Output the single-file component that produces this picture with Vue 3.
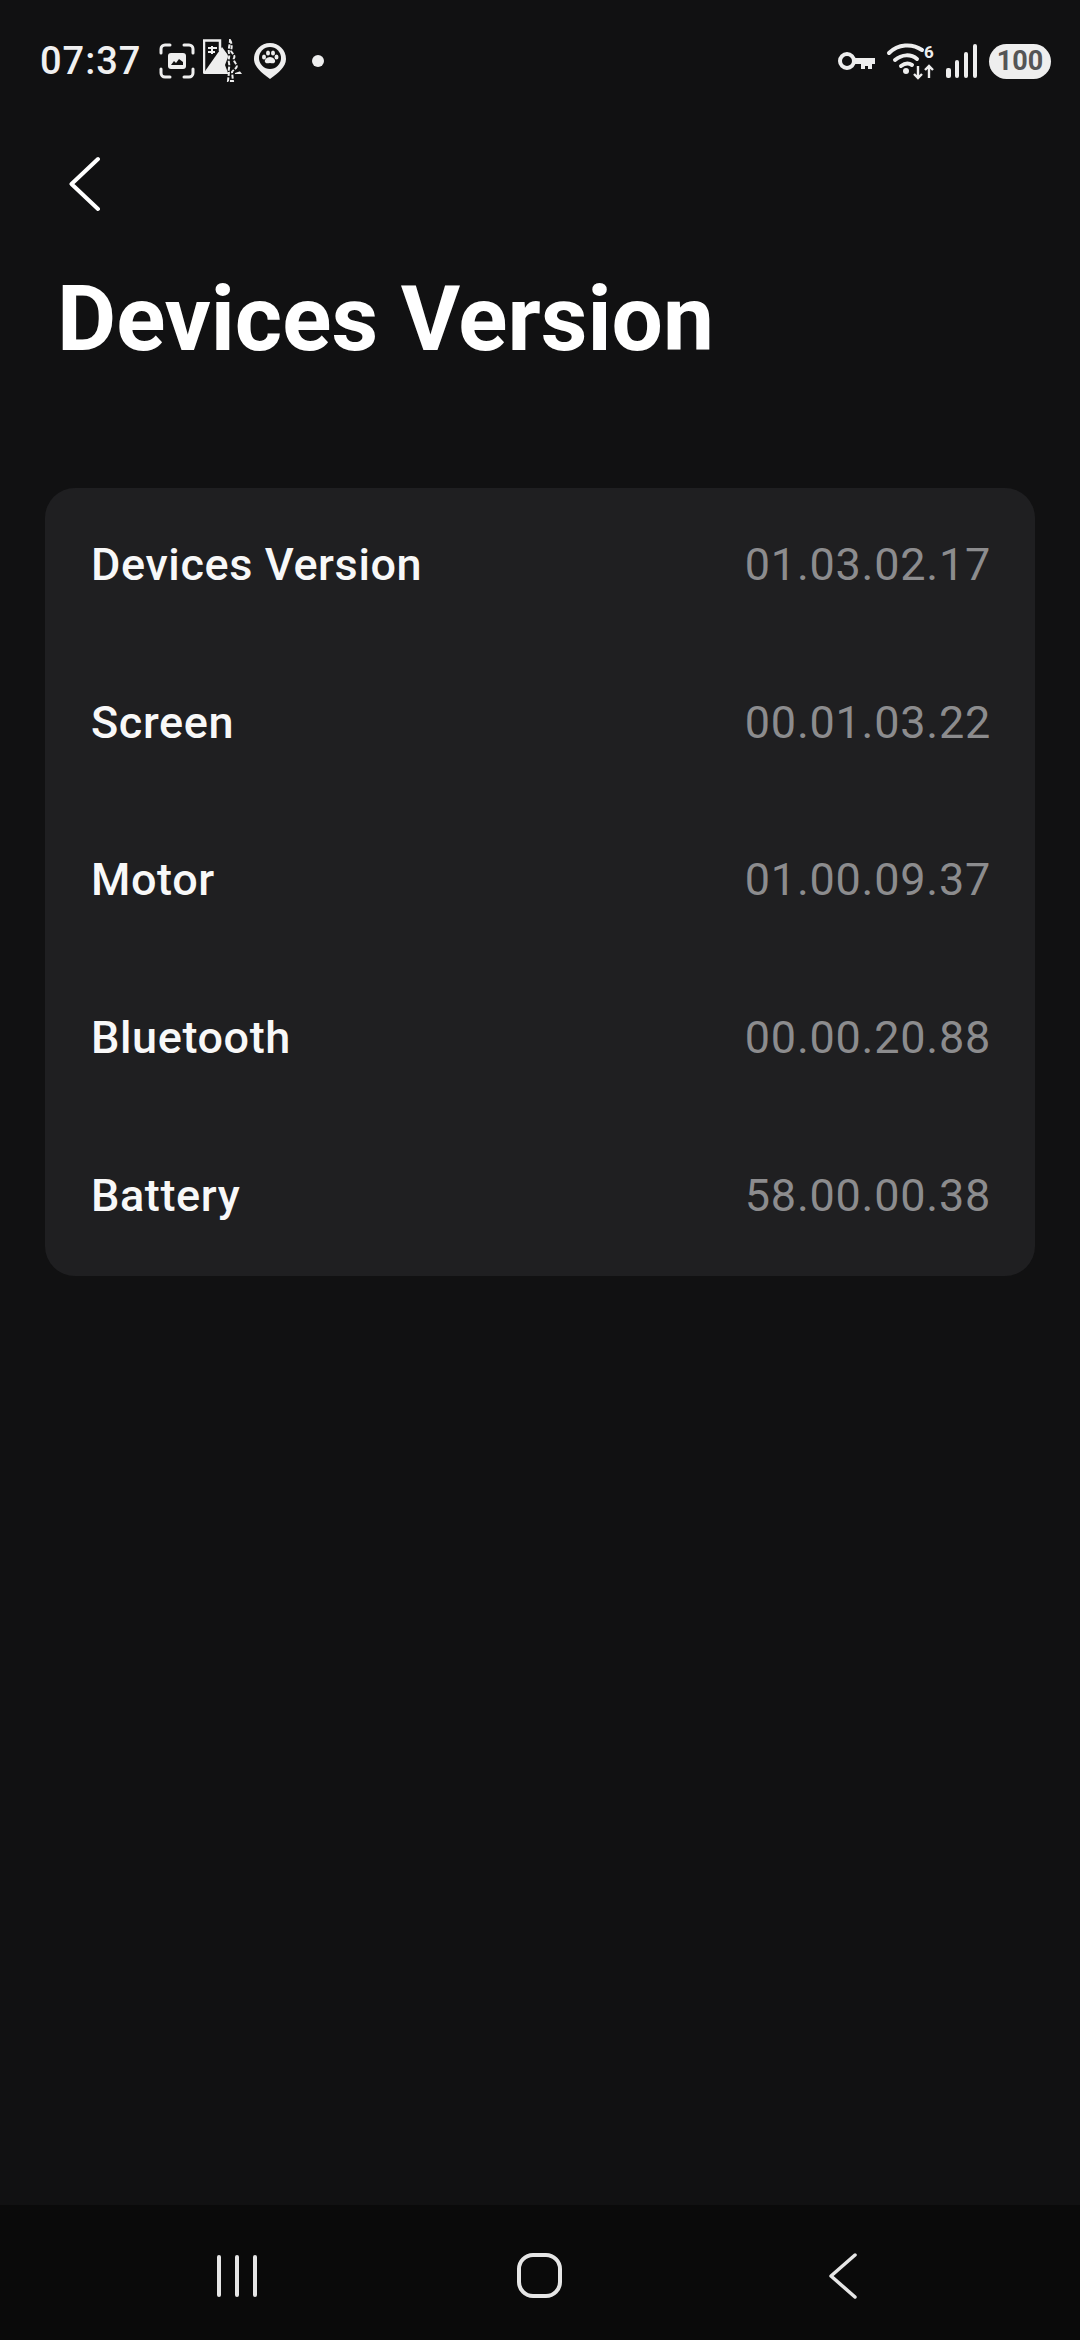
<template>
  <div class="page">
    <!-- status bar -->
    <header class="status-bar">
      <span class="time">07:37</span>
      <div class="status-left">
        <svg width="36" height="36" viewBox="0 0 36 36">
          <path d="M2 10V6a4 4 0 0 1 4-4h5M25 2h5a4 4 0 0 1 4 4v4M34 26v4a4 4 0 0 1-4 4h-5M11 34H6a4 4 0 0 1-4-4v-4" fill="none" stroke="#eee" stroke-width="3" stroke-linecap="round"/>
          <rect x="9" y="10" width="18" height="16" rx="3" fill="#eee"/>
          <path d="M12 22l3-4 2 2 3-4 4 3v3z" fill="#111"/>
        </svg>
        <svg width="42" height="44" viewBox="0 0 42 44">
          <path d="M1 34V1.500h16V12" fill="none" stroke="#eee" stroke-width="2.500"/>
          <path d="M5 9h9M5 13h7M9 7v8" stroke="#eee" stroke-width="2"/>
          <path d="M0 35L19 8l20 27z" fill="#eee"/>
          <path d="M27 2l3 8 4 5 1 9 3 8-6 2-1 9h-5l-1-9-3-8 3-8-1-8z" fill="#111"/>
          <path d="M27 1c2 3 2 8 1 10s5 5 3 8 5 7 2 10-3 2-4 4l1 9h-5l1-9c-1-2 1-5 0-9s1-7 0-10 1-9 1-13z" fill="none" stroke="#eee" stroke-width="2" stroke-dasharray="4 1.500"/>
        </svg>
        <svg width="34" height="38" viewBox="0 0 34 38">
          <path d="M17 1C8 1 1 8 1 17c0 8 8 14 16 20 8-6 16-12 16-20C33 8 26 1 17 1z" fill="#eee"/>
          <circle cx="17" cy="16" r="11" fill="#111"/>
          <ellipse cx="11" cy="15" rx="2" ry="2.500" fill="#eee"/>
          <ellipse cx="15" cy="11" rx="2" ry="2.600" fill="#eee"/>
          <ellipse cx="20" cy="11" rx="2" ry="2.600" fill="#eee"/>
          <ellipse cx="23.500" cy="15" rx="2" ry="2.500" fill="#eee"/>
          <path d="M17 15c-3 0-6 3-5 5 1 2 3 1 5 1s4 1 5-1c1-2-2-5-5-5z" fill="#eee"/>
        </svg>
        <span class="dot"></span>
      </div>
      <div class="status-right">
        <svg width="38" height="20" viewBox="0 0 38 20">
          <circle cx="9" cy="10" r="7" fill="none" stroke="#eee" stroke-width="4"/>
          <path d="M16 7h21v6h-3v5h-4v-3h-3v3h-4v-5h-7z" fill="#eee"/>
        </svg>
        <svg class="wifi" width="48" height="36" viewBox="0 0 48 36">
          <path d="M2 10c9-9 23-10 33-3" fill="none" stroke="#eee" stroke-width="4" stroke-linecap="round"/>
          <path d="M8 17c7-6 16-6 22-1" fill="none" stroke="#eee" stroke-width="4" stroke-linecap="round"/>
          <path d="M14 23c4-3 8-3 11-1" fill="none" stroke="#eee" stroke-width="4" stroke-linecap="round"/>
          <circle cx="19" cy="28" r="3" fill="#eee"/>
          <path d="M31 23v12M27 31l4 4 4-4M42 35V23M38 27l4-4 4 4" fill="none" stroke="#eee" stroke-width="2.400"/>
          <text x="37" y="15" class="wifi-six">6</text>
        </svg>
        <svg width="32" height="34" viewBox="0 0 32 34">
          <rect x="0" y="24" width="5" height="10" rx="2" fill="#eee"/>
          <rect x="9" y="16" width="4" height="18" rx="2" fill="#eee"/>
          <rect x="18" y="8" width="4" height="26" rx="2" fill="#eee"/>
          <rect x="27" y="0" width="4" height="34" rx="2" fill="#eee"/>
        </svg>
        <span class="battery">100</span>
      </div>
    </header>

    <main class="content">
      <button class="back" type="button" aria-label="Back">
        <svg width="32" height="56" viewBox="0 0 32 56">
          <path d="M29 3L2.500 28 29 53" fill="none" stroke="#fff" stroke-width="4" stroke-linecap="round" stroke-linejoin="round"/>
        </svg>
      </button>

      <h1 class="title">Devices Version</h1>

      <section class="card">
        <div v-for="row in rows" :key="row.name" class="row">
          <span class="row-name">{{ row.name }}</span>
          <span class="row-value">{{ row.version }}</span>
        </div>
      </section>
    </main>

    <!-- android nav -->
    <footer class="nav-bar">
      <div class="recents">
        <span></span><span></span><span></span>
      </div>
      <div class="home"></div>
      <svg width="28" height="46" viewBox="0 0 28 46">
        <path d="M26 2L2 23l24 21" fill="none" stroke="#e6e6e6" stroke-width="3.500" stroke-linecap="round" stroke-linejoin="round"/>
      </svg>
    </footer>
  </div>
</template>

<script setup>
const rows = [
  { name: "Devices Version", version: "01.03.02.17" },
  { name: "Screen", version: "00.01.03.22" },
  { name: "Motor", version: "01.00.09.37" },
  { name: "Bluetooth", version: "00.00.20.88" },
  { name: "Battery", version: "58.00.00.38" }
];
</script>

<style>
html,
body {
  margin: 0;
  background: #111112;
}
</style>

<style scoped>
.page {
  display: flex;
  flex-direction: column;
  width: 1080px;
  height: 2340px;
  overflow: hidden;
  background: #111112;
  color: #fff;
  font-family: Roboto, "Liberation Sans", sans-serif;
}

/* status bar */
.status-bar {
  display: flex;
  align-items: center;
  flex: none;
  height: 82px;
  padding: 20px 29px 0 40px;
}

.time {
  font-size: 38px;
  font-weight: 500;
  letter-spacing: 1px;
  color: #f0f0f0;
}

.status-left {
  display: flex;
  align-items: center;
  margin-left: 18px;
  gap: 8px;
}

.dot {
  width: 12px;
  height: 12px;
  margin-left: 17px;
  border-radius: 50%;
  background: #eee;
}

.status-right {
  display: flex;
  align-items: center;
  margin-left: auto;
  gap: 11px;
}

.wifi {
  overflow: visible;
}

.wifi-six {
  font-size: 17px;
  font-weight: 700;
  fill: #eee;
  font-family: Roboto, sans-serif;
}

.battery {
  width: 62px;
  height: 35px;
  border-radius: 18px;
  background: #eee;
  color: #555;
  font-size: 27px;
  font-weight: 700;
  line-height: 35px;
  text-align: center;
}

/* header */
.content {
  flex: 1;
  padding: 0 45px;
}

.back {
  display: block;
  padding: 0;
  margin: 54px 0 0 24px;
  border: 0;
  background: none;
  line-height: 0;
}

.title {
  margin: 54px 0 0 12px;
  font-size: 91px;
  font-weight: 700;
  line-height: 107px;
  white-space: nowrap;
}

/* card */
.card {
  display: grid;
  grid-template-rows: repeat(5, 1fr);
  height: 788px;
  margin-top: 115px;
  padding: 0 44px 0 46px;
  box-sizing: border-box;
  border-radius: 30px;
  background: #1f1f21;
}

.row {
  display: flex;
  align-items: center;
  justify-content: space-between;
  padding-bottom: 4px;
}

.row-name {
  font-size: 45px;
  font-weight: 500;
  letter-spacing: 0.600px;
  color: #f8f8f8;
}

.row-value {
  font-size: 45px;
  letter-spacing: 0.750px;
  color: #8c8c8e;
}

/* nav */
.nav-bar {
  display: grid;
  grid-template-columns: 1fr 1fr 1fr;
  align-items: center;
  justify-items: center;
  flex: none;
  box-sizing: border-box;
  height: 135px;
  padding: 6px 86px 0;
  background: #0a0a0a;
}

.recents {
  display: flex;
  gap: 14px;
}

.recents span {
  width: 4px;
  height: 42px;
  border-radius: 2px;
  background: #e6e6e6;
}

.home {
  width: 45px;
  height: 45px;
  box-sizing: border-box;
  border: 4px solid #e6e6e6;
  border-radius: 16px;
}
</style>
